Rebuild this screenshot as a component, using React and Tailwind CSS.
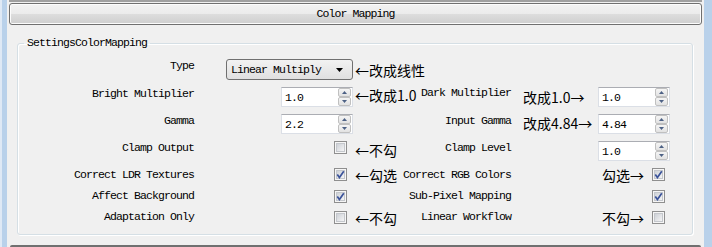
import React from "react";

const lab = "font-['Liberation_Mono',monospace] text-[11.5px] leading-[12px] tracking-[-0.9px] whitespace-nowrap text-black";
const cjk = "font-['Noto_Sans_CJK_SC','Noto_Sans',sans-serif] text-[14px] leading-[16px] whitespace-nowrap text-black";

function Check({ checked, className = "" }) {
  return (
    <svg width="13" height="13" viewBox="0 0 13 13" className={`shrink-0 ${className}`}>
      <defs>
        <linearGradient id="cbg" x1="0" y1="0" x2="1" y2="1">
          <stop offset="0" stopColor="#cbcfd5" />
          <stop offset="1" stopColor="#f7f7f7" />
        </linearGradient>
      </defs>
      <rect x="0.5" y="0.5" width="12" height="12" fill="#f6f6f6" stroke="#8f8f8f" />
      <rect x="2.5" y="2.5" width="8" height="8" fill="url(#cbg)" stroke="#c4c7cc" />
      {checked && (
        <path d="M3.3 6.6 L5.4 9.6 L9.8 3.2" fill="none" stroke="#3b539a" strokeWidth="1.7" />
      )}
    </svg>
  );
}

function Spin({ value, className = "" }) {
  return (
    <div className={`w-[72px] h-[20px] bg-white border border-[#dbdfe6] border-t-[#abadb3] flex items-center ${className}`}>
      <span className={`${lab} flex-1 pl-[3px] pt-[1px]`}>{value}</span>
      <div className="flex flex-col w-[13px] h-[18px] mr-[1px] gap-0">
        <div className="h-[9px] border border-[#c0c0c0] rounded-[2px] bg-gradient-to-b from-[#f5f5f5] to-[#e2e2e2] flex items-center justify-center">
          <svg width="5" height="3" viewBox="0 0 5 3"><path d="M0 3 L2.5 0 L5 3 Z" fill="#4d6185" /></svg>
        </div>
        <div className="h-[9px] border border-[#c0c0c0] rounded-[2px] bg-gradient-to-b from-[#f5f5f5] to-[#e2e2e2] flex items-center justify-center">
          <svg width="5" height="3" viewBox="0 0 5 3"><path d="M0 0 L2.5 3 L5 0 Z" fill="#4d6185" /></svg>
        </div>
      </div>
    </div>
  );
}

function Combo({ className = "" }) {
  return (
    <div className={`w-[127px] h-[21px] border border-[#707070] rounded-[3px] bg-gradient-to-b from-[#f2f2f2] to-[#e0e0e0] flex items-center ${className}`}>
      <span className={`${lab} flex-1 pl-[4px] pt-[1px]`}>Linear Multiply</span>
      <svg width="7" height="4" viewBox="0 0 7 4" className="mr-[9px]"><path d="M0 0 L7 0 L3.5 4 Z" fill="#000" /></svg>
    </div>
  );
}

export default function App() {
  return (
    <div className="w-[712px] h-[247px] bg-[#f0f0f0] flex overflow-hidden">
      <div className="w-[7px] bg-[#b9d1ea] border-l-2 border-[#dfe9f5]" />
      <div className="flex-1 flex flex-col">
        <div className="h-[2px] mx-[2px] bg-[#a0a0a0]" />
        <div className="mt-[1px] mx-[2px] h-[22px] border border-[#707070] rounded-[3px] bg-[linear-gradient(#f2f2f2,#ebebeb_50%,#dddddd_50%,#cfcfcf)] shadow-[inset_0_0_0_1px_#fcfcfc] flex items-center justify-center">
          <span className={lab}>Color Mapping</span>
        </div>

        <fieldset className="mt-[12px] ml-[10px] mr-[11px] border border-[#d5dfe5] rounded-[3px] shadow-[inset_1px_1px_0_#fff,1px_1px_0_#fff] pt-[9px]">
          <legend className={`${lab} ml-[6px] px-[3px]`}>SettingsColorMapping</legend>

          {/* Type */}
          <div className="flex items-start h-[28px]">
            <div className="w-[176px] flex justify-end"><span className={`${lab} mt-[2px]`}>Type</span></div>
            <div className="w-[159px] flex justify-end"><Combo className="mt-[1px]" /></div>
            <div className="w-[158px] flex justify-between">
              <span className={`${cjk} ml-[2px] mt-[4px]`}>←改成线性</span>
            </div>
            <div className="w-[159px]" />
          </div>

          {/* Bright / Dark */}
          <div className="flex items-start h-[27px]">
            <div className="w-[176px] flex justify-end"><span className={`${lab} mt-[2px]`}>Bright Multiplier</span></div>
            <div className="w-[159px] flex justify-end"><Spin value="1.0" className="mt-[1px]" /></div>
            <div className="w-[158px] flex justify-between">
              <span className={`${cjk} ml-[2px] mt-[1px]`}>←改成1.0</span>
              <span className={`${lab} mt-[1px]`}>Dark Multiplier</span>
            </div>
            <div className="w-[159px] flex">
              <span className={`${cjk} ml-[12px] mt-[3px]`}>改成1.0→</span>
              <Spin value="1.0" className="mt-[1px] ml-auto" />
            </div>
          </div>

          {/* Gamma / Input Gamma */}
          <div className="flex items-start h-[27px]">
            <div className="w-[176px] flex justify-end"><span className={`${lab} mt-[2px]`}>Gamma</span></div>
            <div className="w-[159px] flex justify-end"><Spin value="2.2" className="mt-[1px]" /></div>
            <div className="w-[158px] flex justify-end">
              <span className={`${lab} mt-[2px]`}>Input Gamma</span>
            </div>
            <div className="w-[159px] flex">
              <span className={`${cjk} ml-[12px] mt-[2px]`}>改成4.84→</span>
              <Spin value="4.84" className="mt-[1px] ml-auto" />
            </div>
          </div>

          {/* Clamp */}
          <div className="flex items-start h-[27px]">
            <div className="w-[176px] flex justify-end"><span className={`${lab} mt-[2px]`}>Clamp Output</span></div>
            <div className="w-[159px] flex justify-end"><Check className="mt-[1px] mr-[6px]" /></div>
            <div className="w-[158px] flex justify-between">
              <span className={`${cjk} ml-[2px] mt-[2px]`}>←不勾</span>
              <span className={`${lab} mt-[2px]`}>Clamp Level</span>
            </div>
            <div className="w-[159px] flex">
              <Spin value="1.0" className="mt-[1px] ml-auto" />
            </div>
          </div>

          {/* LDR / RGB */}
          <div className="flex items-start h-[22px]">
            <div className="w-[176px] flex justify-end"><span className={`${lab} mt-[2px]`}>Correct LDR Textures</span></div>
            <div className="w-[159px] flex justify-end"><Check checked className="mt-[1px] mr-[6px]" /></div>
            <div className="w-[158px] flex justify-between">
              <span className={`${cjk} ml-[2px]`}>←勾选</span>
              <span className={`${lab} mt-[2px]`}>Correct RGB Colors</span>
            </div>
            <div className="w-[159px] flex">
              <span className={`${cjk} ml-[91px]`}>勾选→</span>
              <Check checked className="mt-[1px] ml-auto mr-[5px]" />
            </div>
          </div>

          {/* Affect / Sub-Pixel */}
          <div className="flex items-start h-[21px]">
            <div className="w-[176px] flex justify-end"><span className={`${lab} mt-[1px]`}>Affect Background</span></div>
            <div className="w-[159px] flex justify-end"><Check checked className="mt-[1px] mr-[6px]" /></div>
            <div className="w-[158px] flex justify-end">
              <span className={`${lab} mt-[1px]`}>Sub-Pixel Mapping</span>
            </div>
            <div className="w-[159px] flex">
              <Check checked className="mt-[1px] ml-auto mr-[5px]" />
            </div>
          </div>

          {/* Adaptation / Linear */}
          <div className="flex items-start h-[24px]">
            <div className="w-[176px] flex justify-end"><span className={`${lab} mt-[1px]`}>Adaptation Only</span></div>
            <div className="w-[159px] flex justify-end"><Check className="mt-[1px] mr-[6px]" /></div>
            <div className="w-[158px] flex justify-between">
              <span className={`${cjk} ml-[2px]`}>←不勾</span>
              <span className={`${lab} mt-[1px]`}>Linear Workflow</span>
            </div>
            <div className="w-[159px] flex">
              <span className={`${cjk} ml-[91px]`}>不勾→</span>
              <Check className="mt-[1px] ml-auto mr-[5px]" />
            </div>
          </div>
        </fieldset>

        <div className="mt-[10px] mx-[3px] h-[2px] bg-[#707070] rounded-t-[2px]" />
      </div>
      <div className="w-[8px] bg-[#b9d1ea]" />
    </div>
  );
}
